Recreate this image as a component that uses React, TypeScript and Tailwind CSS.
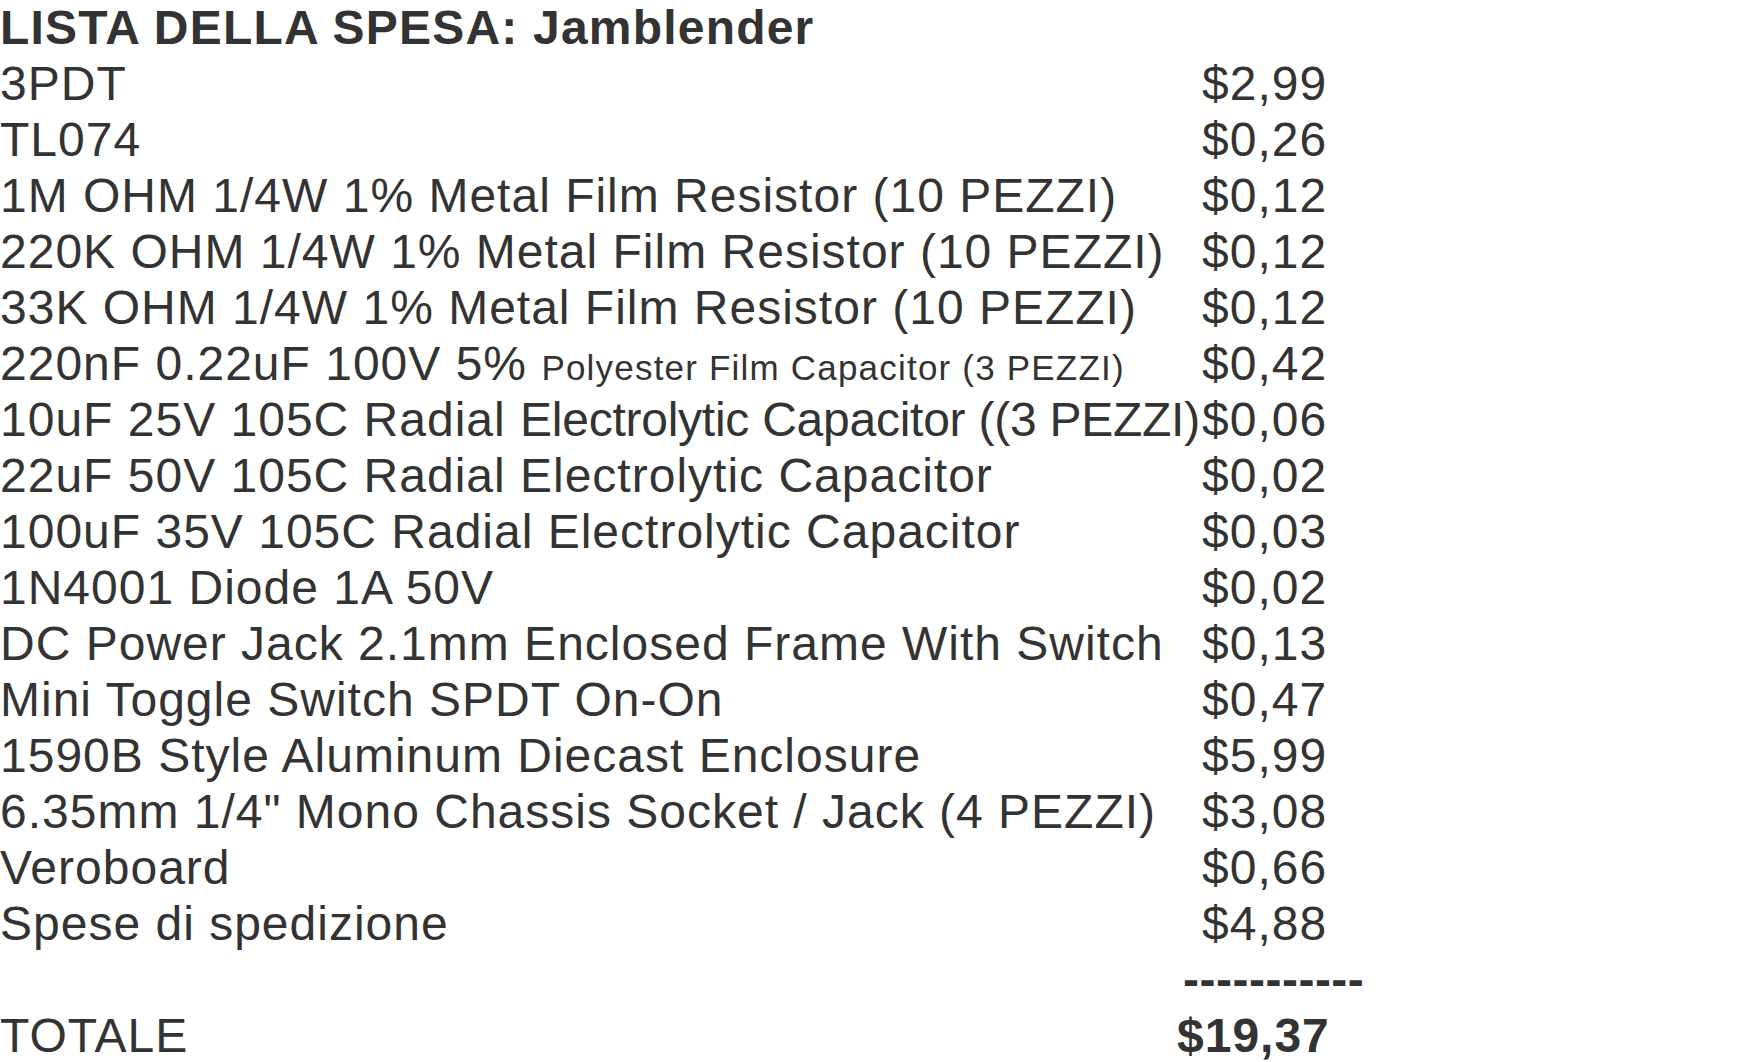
import React from "react";

const rows: { name: React.ReactNode; price: string }[] = [
  { name: "3PDT", price: "$2,99" },
  { name: "TL074", price: "$0,26" },
  { name: "1M OHM 1/4W 1% Metal Film Resistor (10 PEZZI)", price: "$0,12" },
  { name: "220K OHM 1/4W 1% Metal Film Resistor (10 PEZZI)", price: "$0,12" },
  { name: "33K OHM 1/4W 1% Metal Film Resistor (10 PEZZI)", price: "$0,12" },
  {
    name: (
      <>
        220nF 0.22uF 100V 5%{" "}
        <span className="text-[35px] leading-[35px] tracking-[1.2px]">Polyester Film Capacitor (3 PEZZI)</span>
      </>
    ),
    price: "$0,42",
  },
  {
    name: (
      <>
        10uF 25V 105C Radial{" "}
        <span className="tracking-[-0.25px]">Electrolytic Capacitor ((3 PEZZI)</span>
      </>
    ),
    price: "$0,06",
  },
  { name: "22uF 50V 105C Radial Electrolytic Capacitor", price: "$0,02" },
  { name: "100uF 35V 105C Radial Electrolytic Capacitor", price: "$0,03" },
  { name: "1N4001 Diode 1A 50V", price: "$0,02" },
  { name: "DC Power Jack 2.1mm Enclosed Frame With Switch", price: "$0,13" },
  { name: "Mini Toggle Switch SPDT On-On", price: "$0,47" },
  { name: "1590B Style Aluminum Diecast Enclosure", price: "$5,99" },
  { name: '6.35mm 1/4" Mono Chassis Socket / Jack (4 PEZZI)', price: "$3,08" },
  { name: "Veroboard", price: "$0,66" },
  { name: "Spese di spedizione", price: "$4,88" },
];

export default function App() {
  return (
    <div
      className="min-h-screen bg-white text-[#333333] text-[48px] leading-[56px] tracking-[1px]"
      style={{ fontFamily: '"Liberation Sans", Arial, sans-serif' }}
    >
      <div className="font-bold whitespace-nowrap tracking-[1.2px] h-[56px]">LISTA DELLA SPESA: Jamblender</div>
      <div className="grid grid-cols-[1202px_auto] auto-rows-[56px] whitespace-nowrap">
        {rows.map((r, i) => (
          <React.Fragment key={i}>
            <div className="h-[56px]">{r.name}</div>
            <div className="h-[56px]">{r.price}</div>
          </React.Fragment>
        ))}
        <div></div>
        <div className="font-bold -ml-[19px] tracking-[0.5px]">-----------</div>
        <div>TOTALE</div>
        <div className="font-bold -ml-[25px]">$19,37</div>
      </div>
    </div>
  );
}
